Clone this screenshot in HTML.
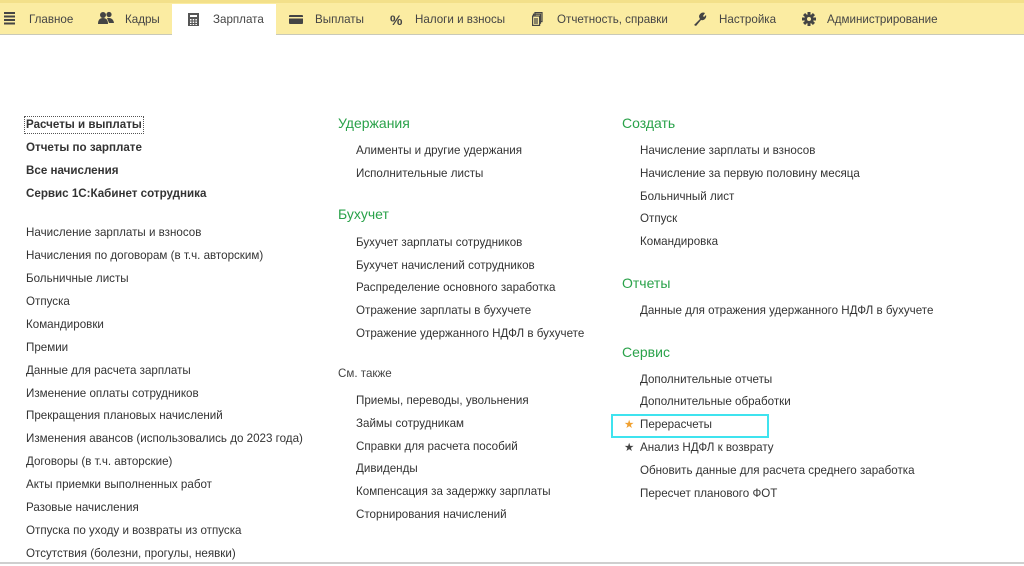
<!DOCTYPE html><html><head><meta charset="utf-8"><style>
body{margin:0;width:1024px;height:566px;background:#fff;font-family:"Liberation Sans",Arial,sans-serif;color:#333;position:relative;overflow:hidden}
.nav{position:absolute;left:0;top:0;width:1024px;height:35px;background:#fbeca2;border-top:3px solid #f3e08a;box-sizing:border-box;border-bottom:1px solid #c9c9b8}
.tab{position:absolute;top:0;height:34px;line-height:34px;font-size:11.6px;color:#444}
.act{background:#fff;top:1px;height:34px}
.t{position:absolute;font-size:11.6px;line-height:14px;white-space:nowrap;color:#333}
.b{font-weight:bold}
.h{position:absolute;font-size:14px;color:#2aa24a;white-space:nowrap;line-height:16px}
.foot{position:absolute;left:0;top:562px;width:1024px;height:2px;background:#cfcfcf}
</style></head><body>
<div class="nav">
<div class="tab act" style="left:172px;width:104px"></div>
<svg style="position:absolute;left:4px;top:9px" width="12" height="13"><rect y="0" width="11" height="2" fill="#444"/><rect y="3.5" width="11" height="2" fill="#444"/><rect y="7" width="11" height="2" fill="#444"/><rect y="10.5" width="11" height="2" fill="#444"/></svg>
<div class="tab" style="left:29px">Главное</div>
<svg style="position:absolute;left:98px;top:8px" width="16" height="14"><circle cx="5" cy="4" r="3" fill="#444"/><circle cx="11" cy="3.5" r="2.6" fill="#444"/><path d="M0 13 Q0 7 5 7 Q10 7 10 13Z" fill="#444"/><path d="M9 7 Q15 6 16 12 L11 12Z" fill="#444"/></svg>
<div class="tab" style="left:125px">Кадры</div>
<svg style="position:absolute;left:188px;top:10px" width="11" height="13"><rect x="0" y="0" width="11" height="13" fill="#555"/><rect x="2" y="2" width="7" height="2" fill="#fff"/><g fill="#fff"><rect x="2" y="6" width="1.5" height="1.5"/><rect x="4.7" y="6" width="1.5" height="1.5"/><rect x="7.4" y="6" width="1.5" height="1.5"/><rect x="2" y="8.5" width="1.5" height="1.5"/><rect x="4.7" y="8.5" width="1.5" height="1.5"/><rect x="7.4" y="8.5" width="1.5" height="1.5"/><rect x="2" y="11" width="1.5" height="1"/><rect x="4.7" y="11" width="1.5" height="1"/><rect x="7.4" y="11" width="1.5" height="1"/></g></svg>
<div class="tab" style="left:213px">Зарплата</div>
<svg style="position:absolute;left:289px;top:12px" width="14" height="9"><rect width="14" height="9" rx="1" fill="#444"/><rect x="0" y="2" width="14" height="1.5" fill="#fbeca2"/></svg>
<div class="tab" style="left:315px">Выплаты</div>
<div class="tab" style="left:390px;font-size:14px;font-weight:bold">%</div>
<div class="tab" style="left:415px">Налоги и взносы</div>
<svg style="position:absolute;left:532px;top:9px" width="11" height="14" fill="none" stroke="#444" stroke-width="1.2"><rect x="3" y="0.6" width="7" height="9"/><rect x="1.5" y="2.2" width="7" height="9"/><rect x="0.6" y="4" width="7" height="9.4" fill="#fbeca2"/><path d="M2 7h4M2 9h4M2 11h4"/></svg>
<div class="tab" style="left:557px">Отчетность, справки</div>
<svg style="position:absolute;left:693px;top:9px" width="14" height="14"><path d="M1 13 L7 7 A4 4 0 0 1 12 1 L10 4 L11 5 L13 3 A4 4 0 0 1 8 8 L3 14 Z" fill="#444"/></svg>
<div class="tab" style="left:719px">Настройка</div>
<svg style="position:absolute;left:802px;top:9px" width="14" height="14"><g fill="#444" transform="translate(7 7)"><circle r="4.6"/><rect x="-1.5" y="-7" width="3" height="14"/><rect x="-7" y="-1.5" width="14" height="3"/><rect x="-1.5" y="-7" width="3" height="14" transform="rotate(45)"/><rect x="-1.5" y="-7" width="3" height="14" transform="rotate(-45)"/></g><circle cx="7" cy="7" r="2" fill="#fbeca2"/></svg>
<div class="tab" style="left:827px">Администрирование</div>
</div>

<div class="t b" style="left:26px;top:118px;outline:1px dotted #555;outline-offset:1px">Расчеты и выплаты</div>
<div class="t b" style="left:26px;top:141px">Отчеты по зарплате</div>
<div class="t b" style="left:26px;top:164px">Все начисления</div>
<div class="t b" style="left:26px;top:187px">Сервис 1С:Кабинет сотрудника</div>
<div class="t" style="left:26px;top:226px">Начисление зарплаты и взносов</div>
<div class="t" style="left:26px;top:249px">Начисления по договорам (в т.ч. авторским)</div>
<div class="t" style="left:26px;top:272px">Больничные листы</div>
<div class="t" style="left:26px;top:295px">Отпуска</div>
<div class="t" style="left:26px;top:318px">Командировки</div>
<div class="t" style="left:26px;top:341px">Премии</div>
<div class="t" style="left:26px;top:364px">Данные для расчета зарплаты</div>
<div class="t" style="left:26px;top:387px">Изменение оплаты сотрудников</div>
<div class="t" style="left:26px;top:409px">Прекращения плановых начислений</div>
<div class="t" style="left:26px;top:432px">Изменения авансов (использовались до 2023 года)</div>
<div class="t" style="left:26px;top:455px">Договоры (в т.ч. авторские)</div>
<div class="t" style="left:26px;top:478px">Акты приемки выполненных работ</div>
<div class="t" style="left:26px;top:501px">Разовые начисления</div>
<div class="t" style="left:26px;top:524px">Отпуска по уходу и возвраты из отпуска</div>
<div class="t" style="left:26px;top:547px">Отсутствия (болезни, прогулы, неявки)</div>

<div class="h" style="left:338px;top:115px">Удержания</div>
<div class="t" style="left:356px;top:144px">Алименты и другие удержания</div>
<div class="t" style="left:356px;top:167px">Исполнительные листы</div>
<div class="h" style="left:338px;top:206px">Бухучет</div>
<div class="t" style="left:356px;top:236px">Бухучет зарплаты сотрудников</div>
<div class="t" style="left:356px;top:259px">Бухучет начислений сотрудников</div>
<div class="t" style="left:356px;top:281px">Распределение основного заработка</div>
<div class="t" style="left:356px;top:304px">Отражение зарплаты в бухучете</div>
<div class="t" style="left:356px;top:327px">Отражение удержанного НДФЛ в бухучете</div>
<div class="t" style="left:338px;top:367px;color:#444">См. также</div>
<div class="t" style="left:356px;top:394px">Приемы, переводы, увольнения</div>
<div class="t" style="left:356px;top:417px">Займы сотрудникам</div>
<div class="t" style="left:356px;top:440px">Справки для расчета пособий</div>
<div class="t" style="left:356px;top:462px">Дивиденды</div>
<div class="t" style="left:356px;top:485px">Компенсация за задержку зарплаты</div>
<div class="t" style="left:356px;top:508px">Сторнирования начислений</div>

<div class="h" style="left:622px;top:115px">Создать</div>
<div class="t" style="left:640px;top:144px">Начисление зарплаты и взносов</div>
<div class="t" style="left:640px;top:167px">Начисление за первую половину месяца</div>
<div class="t" style="left:640px;top:190px">Больничный лист</div>
<div class="t" style="left:640px;top:212px">Отпуск</div>
<div class="t" style="left:640px;top:235px">Командировка</div>
<div class="h" style="left:622px;top:275px">Отчеты</div>
<div class="t" style="left:640px;top:304px">Данные для отражения удержанного НДФЛ в бухучете</div>
<div class="h" style="left:622px;top:344px">Сервис</div>
<div class="t" style="left:640px;top:373px">Дополнительные отчеты</div>
<div class="t" style="left:640px;top:395px">Дополнительные обработки</div>
<div style="position:absolute;left:611px;top:414px;width:154px;height:20px;border:2px solid #3fe3ef"></div>
<div class="t" style="left:624px;top:418px;color:#f0a030">★</div>
<div class="t" style="left:640px;top:418px">Перерасчеты</div>
<div class="t" style="left:624px;top:441px;color:#444">★</div>
<div class="t" style="left:640px;top:441px">Анализ НДФЛ к возврату</div>
<div class="t" style="left:640px;top:464px">Обновить данные для расчета среднего заработка</div>
<div class="t" style="left:640px;top:487px">Пересчет планового ФОТ</div>
<div class="foot"></div>
</body></html>
